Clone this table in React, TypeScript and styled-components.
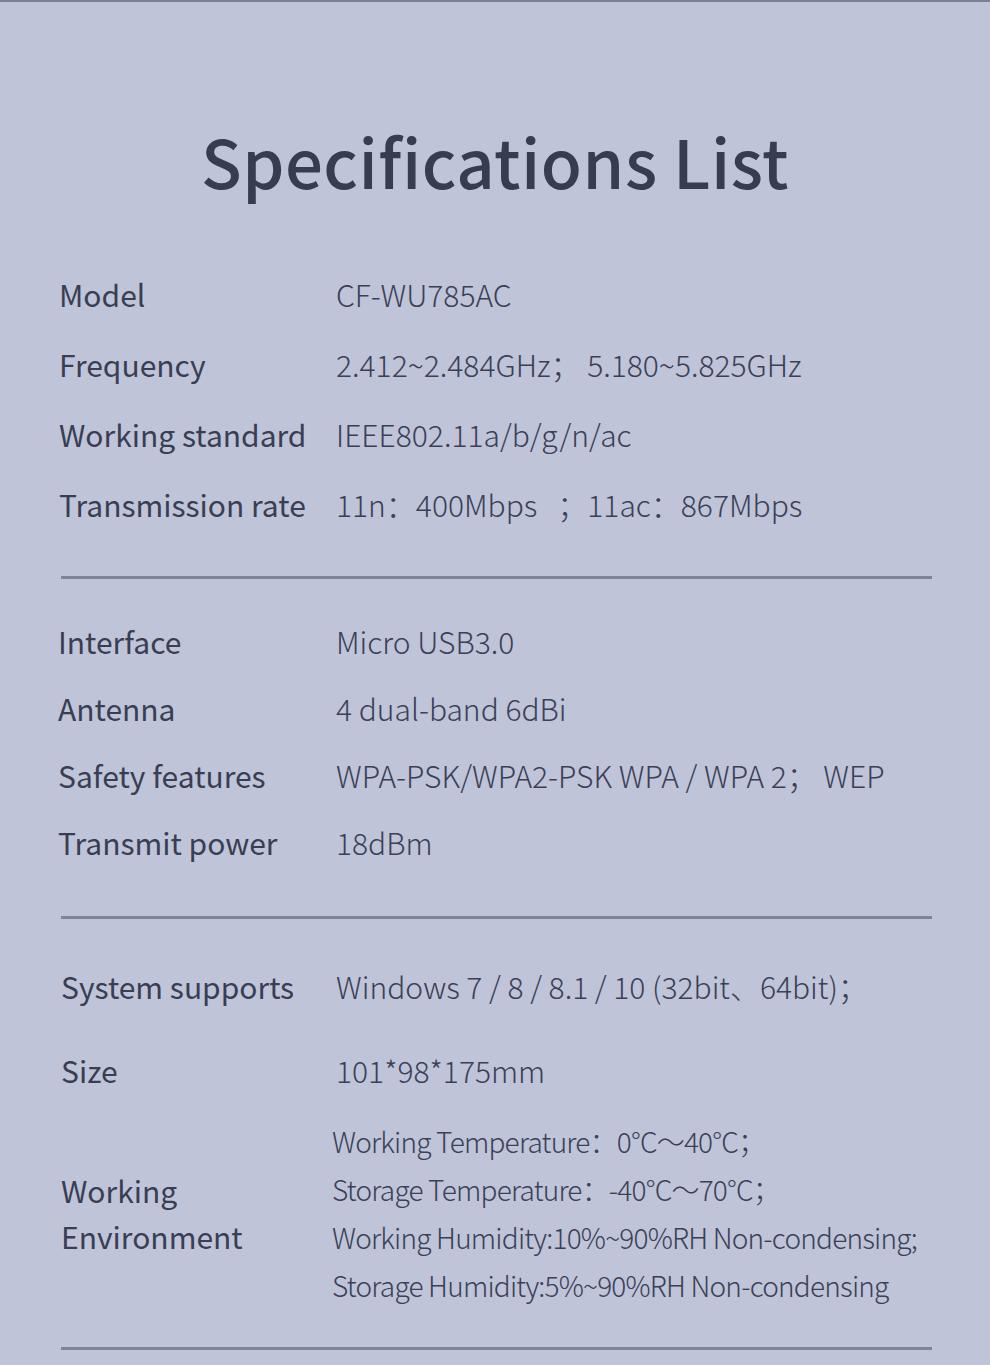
import React from "react";
import styled, { createGlobalStyle } from "styled-components";

const GlobalStyle = createGlobalStyle`
  html, body {
    margin: 0;
    padding: 0;
    background: #bfc4d9;
  }
  body {
    font-family: "Noto Sans CJK SC", "Noto Sans", sans-serif;
  }
`;

type Spec = { label: React.ReactNode; value: React.ReactNode; h: number };

const Page = styled.div`
  width: 990px;
  height: 1365px;
  box-sizing: border-box;
  border-top: 2px solid #7a7f94;
  background: #bfc4d9;
  overflow: hidden;
`;

const Title = styled.h1`
  margin: 0;
  height: 257px;
  display: flex;
  align-items: center;
  justify-content: center;
  padding-top: 57px;
  box-sizing: border-box;
  font-size: 67px;
  font-weight: 500;
  color: #363c52;
  letter-spacing: 0.5px;
`;

const Section = styled.section<{ $pad: number }>`
  display: flex;
  flex-direction: column;
  padding-top: ${({ $pad }) => $pad}px;
`;

const Row = styled.div<{ $h: number; $x?: number }>`
  display: grid;
  grid-template-columns: ${({ $x = 0 }) => 277 - $x}px 1fr;
  align-items: center;
  height: ${({ $h }) => $h}px;
  padding-left: ${({ $x = 0 }) => 59 + $x}px;
`;

const Label = styled.div`
  font-size: 30px;
  font-weight: 400;
  color: #393e53;
  line-height: 46px;
`;

const Value = styled.div`
  font-size: 30px;
  font-weight: 300;
  color: #3b4056;
  line-height: 46px;
  white-space: pre;
`;

const EnvList = styled.div`
  display: flex;
  flex-direction: column;
  margin-left: -4px;
`;

const EnvLine = styled.div`
  font-size: 28px;
  font-weight: 300;
  color: #3b4056;
  line-height: 48px;
  letter-spacing: -0.8px;
  white-space: pre;
`;

const Divider = styled.hr<{ $gap: number }>`
  margin: ${({ $gap }) => $gap}px 58px 0 61px;
  height: 3px;
  border: 0;
  background: #7f8499;
`;

const radio: Spec[] = [
  { label: "Model", value: "CF-WU785AC", h: 70 },
  { label: "Frequency", value: "2.412~2.484GHz； 5.180~5.825GHz", h: 70 },
  { label: "Working standard", value: "IEEE802.11a/b/g/n/ac", h: 70 },
  { label: "Transmission rate", value: "11n：400Mbps   ；11ac：867Mbps", h: 70 },
];

const hardware: Spec[] = [
  { label: "Interface", value: "Micro USB3.0", h: 67 },
  { label: "Antenna", value: "4 dual-band 6dBi", h: 67 },
  { label: "Safety features", value: "WPA-PSK/WPA2-PSK WPA / WPA 2； WEP", h: 67 },
  { label: "Transmit power", value: "18dBm", h: 67 },
];

const envLines = [
  "Working Temperature：0°C～40°C；",
  "Storage Temperature：-40°C～70°C；",
  "Working Humidity:10%~90%RH Non-condensing;",
  "Storage Humidity:5%~90%RH Non-condensing",
];

const SpecRows = ({ items, x }: { items: Spec[]; x?: number }) => (
  <>
    {items.map((s, i) => (
      <Row key={i} $h={s.h} $x={x}>
        <Label>{s.label}</Label>
        <Value>{s.value}</Value>
      </Row>
    ))}
  </>
);

export default function App() {
  return (
    <>
      <GlobalStyle />
      <Page>
        <Title>Specifications List</Title>

        <Section $pad={0}>
          <SpecRows items={radio} />
        </Section>
        <Divider $gap={37} />

        <Section $pad={28}>
          <SpecRows items={hardware} x={-1} />
        </Section>
        <Divider $gap={41} />

        <Section $pad={27}>
          <SpecRows
            x={2}
            items={[
              { label: "System supports", value: "Windows 7 / 8 / 8.1 / 10 (32bit、64bit)；", h: 80 },
              { label: "Size", value: "101*98*175mm", h: 88 },
            ]}
          />
          <Row $h={198} $x={2}>
            <Label>
              Working
              <br />
              Environment
            </Label>
            <EnvList>
              {envLines.map((l) => (
                <EnvLine key={l}>{l}</EnvLine>
              ))}
            </EnvList>
          </Row>
        </Section>
        <Divider $gap={35} />
      </Page>
    </>
  );
}
